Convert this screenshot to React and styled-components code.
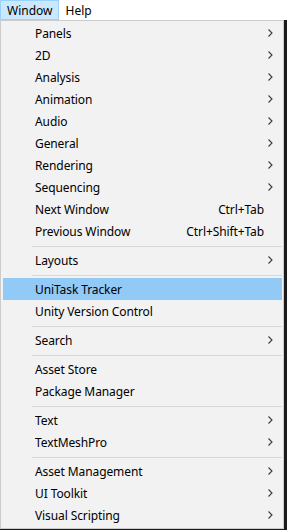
import React from 'react';
import styled, { createGlobalStyle } from 'styled-components';

const GlobalStyle = createGlobalStyle`
  html, body {
    margin: 0;
    padding: 0;
    background: #1b1b1b;
  }
  body {
    font-family: "Noto Sans", "Liberation Sans", sans-serif;
    font-size: 12px;
    color: #000;
  }
`;

const Page = styled.div`
  width: 287px;
  height: 530px;
  overflow: hidden;
`;

const MenuBar = styled.div`
  display: flex;
  height: 20px;
  background: #ffffff;
`;

const MenuBarItem = styled.div`
  display: flex;
  align-items: center;
  box-sizing: border-box;
  height: 20px;
  padding: 0 5px 0 6px;
  border: 1px solid ${p => (p.$active ? '#99d1ff' : 'transparent')};
  background: ${p => (p.$active ? '#cce8ff' : 'transparent')};
`;

const Dropdown = styled.div`
  width: 284px;
  box-sizing: border-box;
  border: 1px solid #cccccc;
  background: #f2f2f2;
  padding: 1px 1px 2px 2px;
`;

const Item = styled.div`
  display: flex;
  align-items: center;
  height: 22px;
  padding: 0 9px 0 32px;
  letter-spacing: -0.1px;
  background: ${p => (p.$highlight ? '#91c9f7' : 'transparent')};
`;

const Label = styled.span`
  flex: 1;
  white-space: nowrap;
`;

const Shortcut = styled.span`
  margin-right: 9px;
  white-space: nowrap;
`;

const Separator = styled.div`
  height: 7px;
  display: flex;
  align-items: center;
  padding-left: 29px;

  &::after {
    content: '';
    flex: 1;
    height: 1px;
    background: #d7d7d7;
    margin-top: 1px;
  }
`;

const Chevron = () => (
  <svg width="5" height="8" viewBox="0 0 5 8">
    <polyline points="0.5,0.5 4,4 0.5,7.5" fill="none" stroke="#3a3a3a" strokeWidth="1.1" />
  </svg>
);

const entries = [
  { label: 'Panels', sub: true },
  { label: '2D', sub: true },
  { label: 'Analysis', sub: true },
  { label: 'Animation', sub: true },
  { label: 'Audio', sub: true },
  { label: 'General', sub: true },
  { label: 'Rendering', sub: true },
  { label: 'Sequencing', sub: true },
  { label: 'Next Window', shortcut: 'Ctrl+Tab' },
  { label: 'Previous Window', shortcut: 'Ctrl+Shift+Tab' },
  'sep',
  { label: 'Layouts', sub: true },
  'sep',
  { label: 'UniTask Tracker', highlight: true },
  { label: 'Unity Version Control' },
  'sep',
  { label: 'Search', sub: true },
  'sep',
  { label: 'Asset Store' },
  { label: 'Package Manager' },
  'sep',
  { label: 'Text', sub: true },
  { label: 'TextMeshPro', sub: true },
  'sep',
  { label: 'Asset Management', sub: true },
  { label: 'UI Toolkit', sub: true },
  { label: 'Visual Scripting', sub: true },
];

export default function App() {
  return (
    <Page>
      <GlobalStyle />
      <MenuBar>
        <MenuBarItem $active>Window</MenuBarItem>
        <MenuBarItem>Help</MenuBarItem>
      </MenuBar>
      <Dropdown>
        {entries.map((e, i) =>
          e === 'sep' ? (
            <Separator key={i} />
          ) : (
            <Item key={i} $highlight={e.highlight}>
              <Label>{e.label}</Label>
              {e.shortcut && <Shortcut>{e.shortcut}</Shortcut>}
              {e.sub && <Chevron />}
            </Item>
          )
        )}
      </Dropdown>
    </Page>
  );
}
